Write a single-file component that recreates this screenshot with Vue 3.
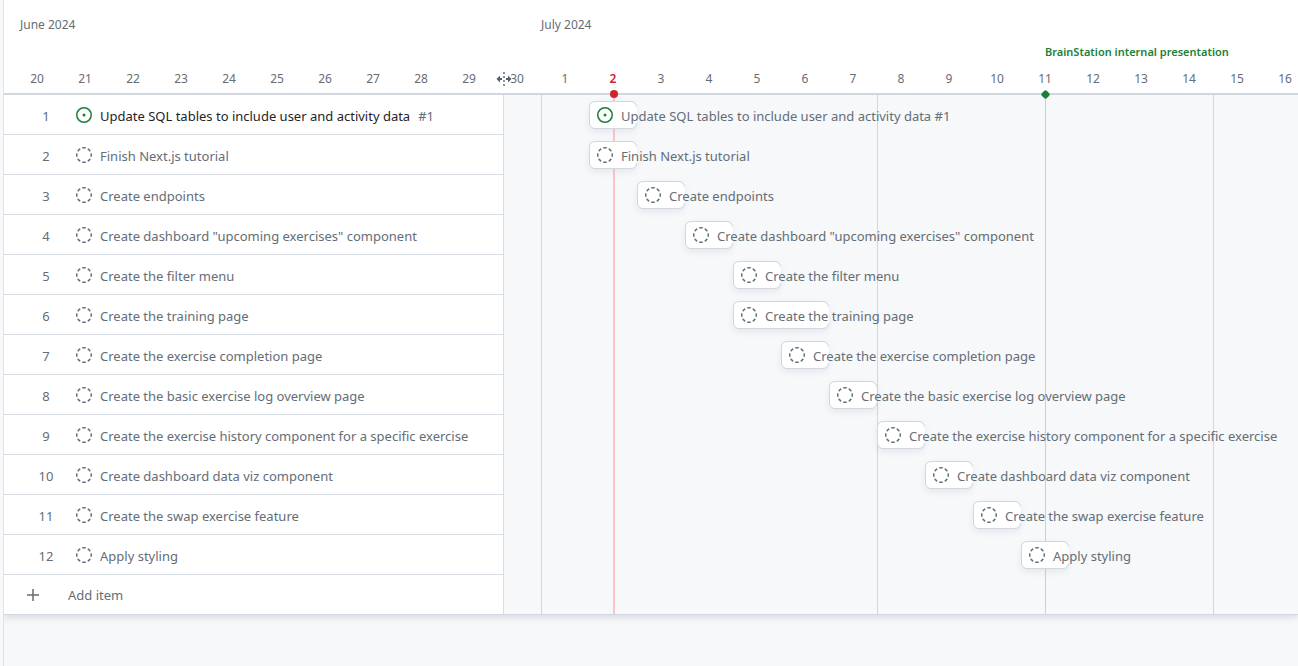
<script setup>
const juneDays = [20, 21, 22, 23, 24, 25, 26, 27, 28, 29, 30]
const julyDays = Array.from({ length: 16 }, (_, i) => i + 1)
const today = 2

const draftPath =
  'M14.307 11.655a.75.75 0 0 1 .165 1.048 8.05 8.05 0 0 1-1.769 1.77.75.75 0 0 1-.883-1.214 6.552 6.552 0 0 0 1.44-1.439.75.75 0 0 1 1.047-.165Zm-2.652-9.962a.75.75 0 0 1 1.048-.165 8.05 8.05 0 0 1 1.77 1.769.75.75 0 0 1-1.214.883 6.552 6.552 0 0 0-1.439-1.44.75.75 0 0 1-.165-1.047ZM6.749.097a8.074 8.074 0 0 1 2.502 0 .75.75 0 1 1-.233 1.482 6.558 6.558 0 0 0-2.036 0A.751.751 0 0 1 6.749.097ZM.955 6.125a.75.75 0 0 1 .624.857 6.558 6.558 0 0 0 0 2.036.75.75 0 1 1-1.482.233 8.074 8.074 0 0 1 0-2.502.75.75 0 0 1 .858-.624Zm14.09 0a.75.75 0 0 1 .858.624c.13.829.13 1.673 0 2.502a.75.75 0 1 1-1.482-.233 6.558 6.558 0 0 0 0-2.036.75.75 0 0 1 .624-.857Zm-8.92 8.92a.75.75 0 0 1 .857-.624 6.558 6.558 0 0 0 2.036 0 .75.75 0 1 1 .233 1.482c-.829.13-1.673.13-2.502 0a.75.75 0 0 1-.624-.858Zm-4.432-3.39a.75.75 0 0 1 1.048.165 6.552 6.552 0 0 0 1.439 1.44.751.751 0 0 1-.883 1.212 8.05 8.05 0 0 1-1.77-1.769.75.75 0 0 1 .166-1.048Zm2.652-9.962A.75.75 0 0 1 4.18 2.74a6.556 6.556 0 0 0-1.44 1.44.751.751 0 0 1-1.212-.883 8.05 8.05 0 0 1 1.769-1.77.75.75 0 0 1 1.048.166Z'
const openPath =
  'M8 9.5a1.5 1.5 0 1 0 0-3 1.5 1.5 0 0 0 0 3ZM8 0a8 8 0 1 1 0 16A8 8 0 0 1 8 0ZM1.5 8a6.5 6.5 0 1 0 13 0 6.5 6.5 0 0 0-13 0Z'

const items = [
  { title: 'Update SQL tables to include user and activity data', issue: '#1', start: 2, days: 1, open: true },
  { title: 'Finish Next.js tutorial', start: 2, days: 1 },
  { title: 'Create endpoints', start: 3, days: 1 },
  { title: 'Create dashboard "upcoming exercises" component', start: 4, days: 1 },
  { title: 'Create the filter menu', start: 5, days: 1 },
  { title: 'Create the training page', start: 5, days: 2 },
  { title: 'Create the exercise completion page', start: 6, days: 1 },
  { title: 'Create the basic exercise log overview page', start: 7, days: 1 },
  { title: 'Create the exercise history component for a specific exercise', start: 8, days: 1 },
  { title: 'Create dashboard data viz component', start: 9, days: 1 },
  { title: 'Create the swap exercise feature', start: 10, days: 1 },
  { title: 'Apply styling', start: 11, days: 1 },
]

// Column 1 is the visible part of June 30, July days follow it.
const span = (item) => ({ gridColumn: `${item.start + 1} / span ${item.days}` })
</script>

<template>
  <main class="page">
    <section class="roadmap">
      <header class="head">
        <div class="month june">
          <h2>June 2024</h2>
          <ol class="days">
            <li v-for="d in juneDays" :key="d">{{ d }}</li>
          </ol>
          <svg class="resize" width="16" height="16" viewBox="0 0 16 16" aria-hidden="true">
            <path d="M7 1h2v2H7zM7 5h2v2H7zM7 9h2v2H7zM7 13h2v2H7z" fill="#8c929a" />
            <path d="M4 4.500.5 8 4 11.500V9h2V7H4zM12 4.500 15.500 8 12 11.500V9h-2V7h2z" fill="#57606a" />
          </svg>
        </div>
        <div class="month july">
          <h2>July 2024</h2>
          <ol class="days">
            <li v-for="d in julyDays" :key="d" :class="{ today: d === today }">{{ d }}</li>
          </ol>
          <span class="milestone">BrainStation internal presentation</span>
        </div>
      </header>

      <div class="body">
        <div class="list">
          <table>
            <tbody>
              <tr v-for="(item, i) in items" :key="i">
                <td class="num">{{ i + 1 }}</td>
                <td class="title">
                  <div class="cell">
                    <svg class="icon" :class="{ open: item.open }" width="16" height="16" viewBox="0 0 16 16" aria-hidden="true">
                      <path :d="item.open ? openPath : draftPath" />
                    </svg>
                    <a v-if="item.open" href="#" class="link">{{ item.title }}</a>
                    <span v-else>{{ item.title }}</span>
                    <span v-if="item.issue" class="issue">{{ item.issue }}</span>
                  </div>
                </td>
              </tr>
            </tbody>
          </table>
          <button class="add" type="button">
            <svg width="16" height="16" viewBox="0 0 16 16" aria-hidden="true">
              <path d="M8 2v12M2 8h12" stroke="currentColor" stroke-width="1.5" fill="none" />
            </svg>
            <span>Add item</span>
          </button>
        </div>

        <div class="chart">
          <div class="lines" aria-hidden="true">
            <i class="week w1"></i>
            <i class="week w2"></i>
            <i class="week w3"></i>
            <i class="now"></i>
            <i class="mark"></i>
          </div>
          <div v-for="(item, i) in items" :key="i" class="track">
            <div class="bar" :style="span(item)">
              <svg class="icon" :class="{ open: item.open }" width="16" height="16" viewBox="0 0 16 16" aria-hidden="true">
                <path :d="item.open ? openPath : draftPath" />
              </svg>
              <span class="label">{{ item.title }} {{ item.issue }}</span>
            </div>
          </div>
        </div>
      </div>
    </section>
  </main>
</template>

<style>
html,
body {
  background: #f6f8fa;
}
</style>

<style scoped>
.page {
  min-height: 100vh;
  box-sizing: border-box;
  margin-left: 3px;
  border-left: 1px solid #dfe2e6;
  overflow: hidden;
  font-family: "Segoe UI", "Noto Sans", "Open Sans", sans-serif;
  font-size: 13px;
  line-height: 20px;
  color: #656d76;
}
.roadmap {
  box-shadow: 0 3px 6px rgba(140, 149, 159, 0.25);
}
.head {
  display: flex;
  height: 93px;
  padding-left: 9px;
  background: #fff;
  border-bottom: 2px solid #d0d7de;
}
.month {
  position: relative;
  display: flex;
  flex: none;
  flex-direction: column;
  justify-content: space-between;
  box-sizing: border-box;
  padding: 15px 0 4px;
}
.month h2 {
  margin: 0;
  font-size: 12px;
  font-weight: 400;
}
.june h2 {
  padding-left: 7px;
}
.days {
  display: flex;
  margin: 0;
  padding: 0;
  list-style: none;
  font-size: 12px;
}
.days li {
  width: 48px;
  text-align: center;
}
.days .today {
  color: #cf222e;
  font-weight: 600;
}
.resize {
  position: absolute;
  right: 29px;
  bottom: 6px;
}
.milestone {
  position: absolute;
  left: 504px;
  top: 42px;
  font-size: 11px;
  font-weight: 600;
  color: #1a7f37;
  white-space: nowrap;
}
.body {
  display: flex;
  border-bottom: 1px solid #d0d7de;
}
.list {
  flex: none;
  width: 500px;
  box-sizing: border-box;
  background: #fff;
  border-right: 1px solid #d8dee4;
}
table {
  width: 100%;
  border-collapse: separate;
  border-spacing: 0;
  table-layout: fixed;
}
td {
  height: 39px;
  padding: 0;
  border-bottom: 1px solid #d8dee4;
}
.num {
  width: 72px;
  box-sizing: border-box;
  padding: 2px 0 0 12px;
  text-align: center;
}
.cell {
  display: flex;
  align-items: center;
  gap: 8px;
  white-space: nowrap;
}
.cell span,
.cell a {
  padding-top: 2px;
}
.icon {
  flex: none;
  fill: #656d76;
}
.icon.open {
  fill: #1a7f37;
}
.link {
  color: #1f2328;
  text-decoration: none;
}
.add {
  display: flex;
  align-items: center;
  gap: 27px;
  width: 100%;
  height: 39px;
  padding: 0 0 0 21px;
  border: 0;
  background: none;
  font: inherit;
  color: inherit;
}
.chart {
  position: relative;
  flex: 1;
  min-width: 0;
  background: #f6f8fa;
}
.lines,
.track {
  display: grid;
  grid-template-columns: 37px repeat(16, 48px);
}
.lines {
  position: absolute;
  inset: 0;
}
.lines i {
  grid-row: 1;
}
.week {
  border-left: 1px solid #d0d7de;
}
.w1 {
  grid-column: 2;
}
.w2 {
  grid-column: 9;
}
.w3 {
  grid-column: 16;
}
.now,
.mark {
  position: relative;
  justify-self: start;
  margin-left: 50%;
}
.now {
  grid-column: 3;
  width: 2px;
  background: #fbc4c6;
}
.mark {
  grid-column: 12;
  width: 1px;
  background: #b4dfc0;
}
.now::before,
.mark::before {
  content: "";
  position: absolute;
}
.now::before {
  top: -5px;
  left: -3px;
  width: 8px;
  height: 8px;
  border-radius: 50%;
  background: #cf222e;
}
.mark::before {
  top: -4px;
  left: -3px;
  width: 7px;
  height: 7px;
  border-radius: 2px;
  background: #1a7f37;
  transform: rotate(45deg);
}
.track {
  position: relative;
  height: 40px;
  align-items: center;
}
.bar {
  position: relative;
  display: flex;
  align-items: center;
  gap: 8px;
  height: 28px;
  min-width: 0;
  box-sizing: border-box;
  padding-left: 7px;
  background: #fff;
  border: 1px solid #d0d7de;
  border-radius: 6px;
  box-shadow: 0 3px 6px rgba(140, 149, 159, 0.15);
  white-space: nowrap;
}
/* Opens the right edge where the title runs out of the bar. */
.bar::after {
  content: "";
  position: absolute;
  top: 5px;
  right: -1px;
  width: 1px;
  height: 16px;
  background: #fff;
}
.label {
  position: relative;
  z-index: 1;
  padding-top: 2px;
}
</style>
